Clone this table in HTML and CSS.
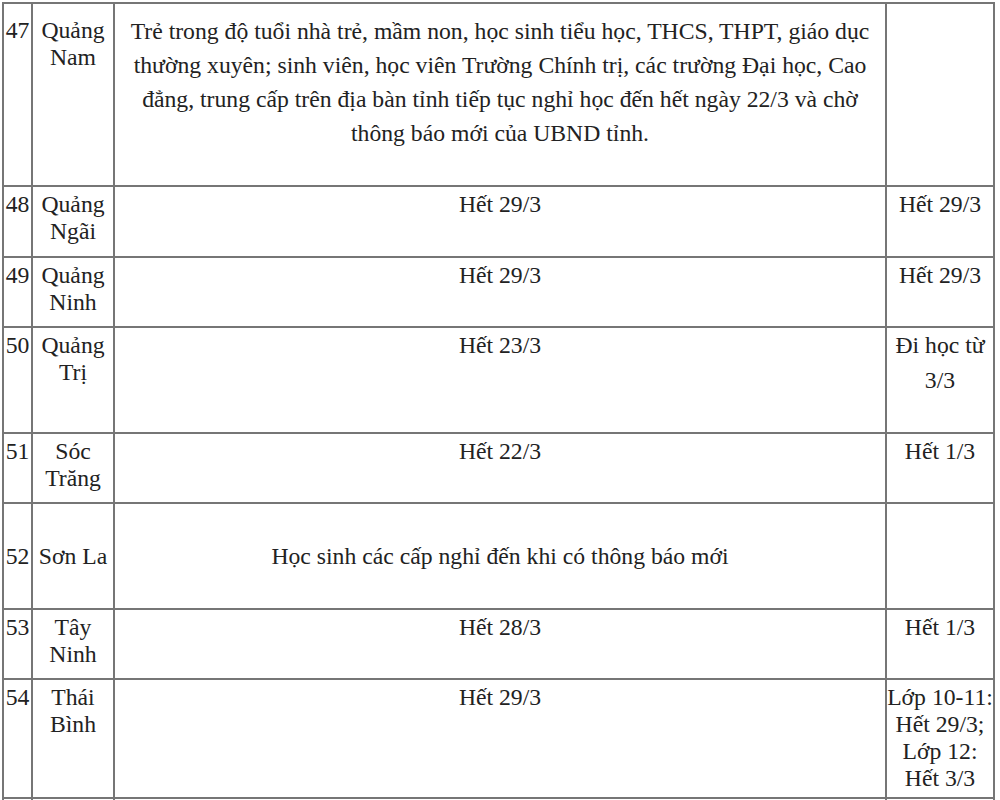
FILE: index.html
```html
<!DOCTYPE html>
<html lang="vi">
<head>
<meta charset="utf-8">
<title>Lịch nghỉ học</title>
<link rel="stylesheet" href="styles.css">
</head>
<body>
<table class="sched">
  <colgroup>
    <col class="c-num"><col class="c-prov"><col class="c-main"><col class="c-right">
  </colgroup>
  <tbody>
    <tr class="r47 first">
      <td class="n">47</td>
      <td class="p">Quảng Nam</td>
      <td class="m">Trẻ trong độ tuổi nhà trẻ, mầm non, học sinh tiểu học, THCS, THPT, giáo dục<br>thường xuyên; sinh viên, học viên Trường Chính trị, các trường Đại học, Cao<br>đẳng, trung cấp trên địa bàn tỉnh tiếp tục nghỉ học đến hết ngày 22/3 và chờ<br>thông báo mới của UBND tỉnh.</td>
      <td class="x"></td>
    </tr>
    <tr class="r71">
      <td class="n">48</td>
      <td class="p">Quảng Ngãi</td>
      <td class="m">Hết 29/3</td>
      <td class="x">Hết 29/3</td>
    </tr>
    <tr class="r70">
      <td class="n">49</td>
      <td class="p">Quảng Ninh</td>
      <td class="m">Hết 29/3</td>
      <td class="x">Hết 29/3</td>
    </tr>
    <tr class="r106">
      <td class="n">50</td>
      <td class="p">Quảng Trị</td>
      <td class="m">Hết 23/3</td>
      <td class="x">Đi học từ<br>3/3</td>
    </tr>
    <tr class="r70">
      <td class="n">51</td>
      <td class="p">Sóc Trăng</td>
      <td class="m">Hết 22/3</td>
      <td class="x">Hết 1/3</td>
    </tr>
    <tr class="r106 mid">
      <td class="n">52</td>
      <td class="p">Sơn La</td>
      <td class="m">Học sinh các cấp nghỉ đến khi có thông báo mới</td>
      <td class="x"></td>
    </tr>
    <tr class="r70">
      <td class="n">53</td>
      <td class="p">Tây Ninh</td>
      <td class="m">Hết 28/3</td>
      <td class="x">Hết 1/3</td>
    </tr>
    <tr class="r119">
      <td class="n">54</td>
      <td class="p">Thái Bình</td>
      <td class="m">Hết 29/3</td>
      <td class="x tight">Lớp 10-11:<br>Hết 29/3;<br>Lớp 12:<br>Hết 3/3</td>
    </tr>
    <tr class="r70">
      <td class="n"></td>
      <td class="p"></td>
      <td class="m"></td>
      <td class="x"></td>
    </tr>
  </tbody>
</table>
</body>
</html>
```
FILE: styles.css
```css
html, body {
  margin: 0;
  padding: 0;
  background: #ffffff;
  font-family: "Liberation Serif", "Times New Roman", serif;
}

.sched {
  margin: 2px 0 0 2px;
  border-collapse: collapse;
  table-layout: fixed;
  width: 991px;
  font-size: 23.7px;
  color: #222222;
}

.c-num { width: 29px; }
.c-prov { width: 82px; }
.c-main { width: 772px; }
.c-right { width: 108px; }

.sched td {
  font-family: "Liberation Serif", "Times New Roman", serif;
  border: 2px solid #767676;
  vertical-align: top;
  text-align: center;
  padding: 0 1px;
  line-height: 34px;
}

.sched td.n,
.sched td.p {
  line-height: 27px;
  padding-top: 4px;
}

.sched td.n {
  padding-left: 0;
  padding-right: 0;
}

.sched td.x {
  padding-left: 0;
  padding-right: 0;
  white-space: nowrap;
  line-height: 35px;
}

.sched td.x.tight {
  line-height: 27px;
  padding-top: 4px;
}

.sched tr.first td.n,
.sched tr.first td.p {
  padding-top: 13px;
}

.sched tr.first td.m {
  padding-top: 10px;
}

.sched tr.mid td {
  vertical-align: middle;
  padding-top: 0;
}

.r47 { height: 183px; }
.r71 { height: 71px; }
.r70 { height: 70px; }
.r106 { height: 106px; }
.r119 { height: 119px; }
```
